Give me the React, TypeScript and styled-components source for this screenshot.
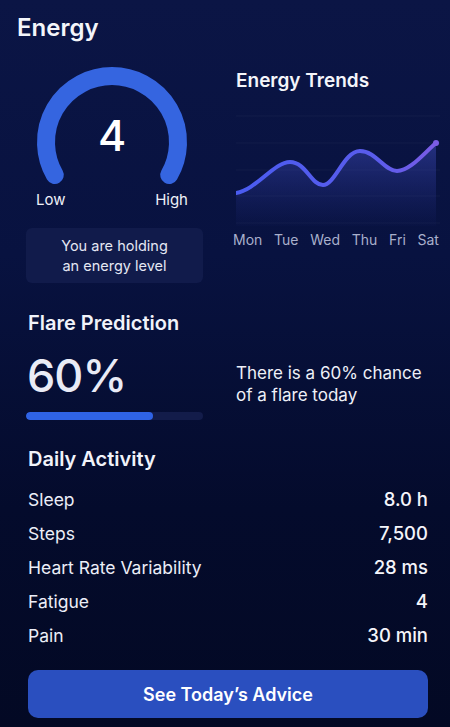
import React from "react";
import styled, { createGlobalStyle } from "styled-components";

const GlobalStyle = createGlobalStyle`
  html, body {
    margin: 0;
    padding: 0;
    background: #040b2a;
  }
  body {
    font-family: Inter, "Noto Sans", "Liberation Sans", sans-serif;
    color: #eef0f8;
  }
  * { box-sizing: border-box; }
`;

const days = ["Mon", "Tue", "Wed", "Thu", "Fri", "Sat"];

const activity = [
  { label: "Sleep", value: "8.0 h" },
  { label: "Steps", value: "7,500" },
  { label: "Heart Rate Variability", value: "28 ms" },
  { label: "Fatigue", value: "4" },
  { label: "Pain", value: "30 min" },
];

const flareChance = 72;

export default function App() {
  return (
    <>
      <GlobalStyle />
      <Page>
        <Title>Energy</Title>

        <TopGrid>
          <div>
            <GaugeWrap>
              <svg width="177" height="128" viewBox="0 0 177 128">
                <path
                  d="M28.8 115 A66 66 0 1 1 143.2 115"
                  fill="none"
                  stroke="#3565e0"
                  strokeWidth="18"
                  strokeLinecap="round"
                />
              </svg>
              <GaugeValue>4</GaugeValue>
            </GaugeWrap>
            <GaugeLabels>
              <span>Low</span>
              <span>High</span>
            </GaugeLabels>
            <InfoBox>
              You are holding
              <br />
              an energy level
            </InfoBox>
          </div>

          <div>
            <SubTitle>Energy Trends</SubTitle>
            <Chart>
              <svg width="204" height="122" viewBox="0 0 204 122">
                <defs>
                  <linearGradient id="area" x1="0" y1="0" x2="0" y2="1">
                    <stop offset="0%" stopColor="#5160e8" stopOpacity="0.38" />
                    <stop offset="100%" stopColor="#3a45c0" stopOpacity="0.02" />
                  </linearGradient>
                  <linearGradient id="line" x1="0" y1="0" x2="1" y2="0">
                    <stop offset="0%" stopColor="#4a5cf0" />
                    <stop offset="70%" stopColor="#5a5cec" />
                    <stop offset="100%" stopColor="#7b5ce4" />
                  </linearGradient>
                </defs>
                {[8, 35, 62, 88, 115].map((y) => (
                  <line key={y} x1="0" x2="204" y1={y} y2={y} stroke="#ffffff" strokeOpacity="0.04" />
                ))}
                <path
                  d="M0 85 C20 82, 38 54, 54 54 S75 77, 87 77 S108 43, 124 43 S148 63, 161 63 S188 45, 200 35 L200 118 L0 118 Z"
                  fill="url(#area)"
                />
                <path
                  d="M0 85 C20 82, 38 54, 54 54 S75 77, 87 77 S108 43, 124 43 S148 63, 161 63 S188 45, 200 35"
                  fill="none"
                  stroke="url(#line)"
                  strokeWidth="4"
                  strokeLinecap="round"
                />
                <circle cx="200" cy="35" r="3" fill="#7b5ce4" />
              </svg>
            </Chart>
            <DayRow>
              {days.map((d) => (
                <span key={d}>{d}</span>
              ))}
            </DayRow>
          </div>
        </TopGrid>

        <FlareGrid>
          <div>
            <SectionTitle>Flare Prediction</SectionTitle>
            <BigPercent>60%</BigPercent>
            <Track>
              <Fill style={{ width: `${flareChance}%` }} />
            </Track>
          </div>
          <FlareText>
            There is a 60% chance
            <br />
            of a flare today
          </FlareText>
        </FlareGrid>

        <Activity>
          <SectionTitle>Daily Activity</SectionTitle>
          <Rows>
            {activity.map((a) => (
              <Row key={a.label}>
                <span>{a.label}</span>
                <Value>{a.value}</Value>
              </Row>
            ))}
          </Rows>
        </Activity>

        <AdviceButton>See Today’s Advice</AdviceButton>
      </Page>
    </>
  );
}

const Page = styled.div`
  width: 450px;
  height: 727px;
  overflow: hidden;
  padding: 12px 22px 0 26px;
  background: linear-gradient(180deg, #0b1545 0%, #081240 35%, #040b2c 70%, #030924 100%);
`;

const Title = styled.h1`
  margin: 0 0 0 -9px;
  font-size: 24px;
  line-height: 32px;
  font-weight: 600;
  color: #f4f5fa;
`;

const TopGrid = styled.div`
  display: grid;
  grid-template-columns: 177px 1fr;
  column-gap: 33px;
  margin-top: 16px;
`;

const GaugeWrap = styled.div`
  position: relative;
  height: 128px;
  svg {
    display: block;
  }
`;

const GaugeValue = styled.div`
  position: absolute;
  left: 0;
  width: 172px;
  top: 52px;
  text-align: center;
  font-size: 43px;
  line-height: 46px;
  font-weight: 500;
  color: #ffffff;
`;

const GaugeLabels = styled.div`
  display: flex;
  justify-content: space-between;
  padding: 0 15px 0 10px;
  margin-top: 3px;
  font-size: 15px;
  line-height: 18px;
  color: #eef0f8;
`;

const InfoBox = styled.div`
  margin-top: 19px;
  height: 55px;
  border-radius: 6px;
  background: #111b4b;
  display: flex;
  align-items: center;
  justify-content: center;
  text-align: center;
  font-size: 14.5px;
  line-height: 20px;
  color: #e4e7f3;
`;

const SubTitle = styled.h2`
  margin: 9px 0 0;
  font-size: 19px;
  line-height: 24px;
  font-weight: 600;
  color: #f4f5fa;
`;

const Chart = styled.div`
  margin-top: 15px;
  svg {
    display: block;
  }
`;

const DayRow = styled.div`
  display: flex;
  justify-content: space-between;
  width: 206px;
  margin: 1px 0 0 -3px;
  font-size: 14px;
  line-height: 18px;
  color: #a9b0cc;
`;

const FlareGrid = styled.div`
  display: grid;
  grid-template-columns: 177px 1fr;
  column-gap: 33px;
  align-items: center;
  margin-top: 27px;
`;

const SectionTitle = styled.h2`
  margin: 0 0 0 2px;
  font-size: 20px;
  line-height: 26px;
  font-weight: 600;
  color: #f1f3fa;
`;

const BigPercent = styled.div`
  margin: 15px 0 0 1px;
  font-size: 45px;
  line-height: 50px;
  font-weight: 500;
  letter-spacing: -1px;
  color: #e9ebf6;
`;

const Track = styled.div`
  margin-top: 11px;
  height: 8px;
  border-radius: 4px;
  background: #131c4a;
  overflow: hidden;
`;

const Fill = styled.div`
  height: 100%;
  border-radius: 4px;
  background: #2f63e6;
`;

const FlareText = styled.div`
  margin-top: 38px;
  font-size: 17px;
  line-height: 22px;
  color: #eef0f8;
`;

const Activity = styled.section`
  margin-top: 26px;
`;

const Rows = styled.div`
  display: flex;
  flex-direction: column;
  margin-top: 10px;
  padding: 0 0 0 2px;
`;

const Row = styled.div`
  display: flex;
  justify-content: space-between;
  align-items: center;
  height: 34px;
  font-size: 17.5px;
  color: #eceef8;
`;

const Value = styled.span`
  font-size: 18.5px;
  font-weight: 500;
  color: #f4f5fa;
`;

const AdviceButton = styled.button`
  display: block;
  width: 400px;
  height: 48px;
  margin: 18px 0 0 2px;
  border: none;
  border-radius: 10px;
  background: #2a4fbf;
  color: #ffffff;
  font-family: inherit;
  font-size: 18px;
  font-weight: 600;
  cursor: pointer;
`;
